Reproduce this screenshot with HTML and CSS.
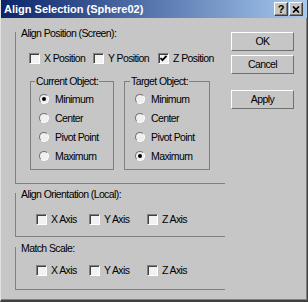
FILE: index.html
```html
<!DOCTYPE html>
<html>

<head>
    <meta charset="utf-8">
    <title>Align Selection</title>
    <link rel="stylesheet" href="styles.css">
</head>

<body>
    <div class="window">
        <div class="titlebar">
            <span class="title">Align Selection (Sphere02)</span>
            <div class="title-buttons">
                <span class="tbtn tbtn-help">?</span>
                <span class="tbtn">
                    <svg width="8" height="7" viewBox="0 0 8 7">
                        <path d="M1 0.5 L7 6.5 M7 0.5 L1 6.5" stroke="#000" stroke-width="1.7" fill="none" />
                    </svg>
                </span>
            </div>
        </div>

        <div class="content">
            <div class="groups">
                <!-- position -->
                <div class="group group-position">
                    <div class="group-label">Align Position (Screen):</div>
                    <div class="check-row row-position">
                        <label class="check"><span class="box"></span>X Position</label>
                        <label class="check"><span class="box"></span>Y Position</label>
                        <label class="check"><span class="box">
                                <svg width="9" height="9" viewBox="0 0 9 9">
                                    <polyline points="1.5,4 3.5,6.2 7.5,1.8" stroke="#000" stroke-width="1.8" fill="none" />
                                </svg>
                            </span>Z Position</label>
                    </div>
                    <div class="objects">
                        <div class="subgroup subgroup-current">
                            <div class="subgroup-label">Current Object:</div>
                            <label class="radio"><span class="dot on"></span>Minimum</label>
                            <label class="radio"><span class="dot"></span>Center</label>
                            <label class="radio"><span class="dot"></span>Pivot Point</label>
                            <label class="radio"><span class="dot"></span>Maximum</label>
                        </div>
                        <div class="subgroup subgroup-target">
                            <div class="subgroup-label">Target Object:</div>
                            <label class="radio"><span class="dot"></span>Minimum</label>
                            <label class="radio"><span class="dot"></span>Center</label>
                            <label class="radio"><span class="dot"></span>Pivot Point</label>
                            <label class="radio"><span class="dot on"></span>Maximum</label>
                        </div>
                    </div>
                </div>

                <!-- orientation -->
                <div class="group group-orient">
                    <div class="group-label">Align Orientation (Local):</div>
                    <div class="check-row row-axis">
                        <label class="check"><span class="box"></span>X Axis</label>
                        <label class="check"><span class="box"></span>Y Axis</label>
                        <label class="check"><span class="box"></span>Z Axis</label>
                    </div>
                </div>

                <!-- scale -->
                <div class="group group-scale">
                    <div class="group-label">Match Scale:</div>
                    <div class="check-row row-axis">
                        <label class="check"><span class="box"></span>X Axis</label>
                        <label class="check"><span class="box"></span>Y Axis</label>
                        <label class="check"><span class="box"></span>Z Axis</label>
                    </div>
                </div>
            </div>

            <div class="buttons">
                <div class="btn">OK</div>
                <div class="btn">Cancel</div>
                <div class="btn btn-apply">Apply</div>
            </div>
        </div>
    </div>
</body>

</html>
```

FILE: styles.css
```css
html,
body {
    margin: 0;
    padding: 0;
    background: #c6c6c6;
}

/* window frame */
.window {
    width: 308px;
    height: 302px;
    box-sizing: border-box;
    background: #c6c6c6;
    border-left: 1px solid #e2e2e2;
    border-right: 1px solid #404040;
    border-bottom: 2px solid #404040;
    box-shadow: inset -1px -1px 0 #808080;
    font-family: "Liberation Sans", Arial, sans-serif;
    font-size: 10.5px;
    letter-spacing: -0.6px;
    color: #000;
}

/* title bar */
.titlebar {
    height: 18px;
    display: flex;
    align-items: center;
    justify-content: space-between;
    padding: 0 4px 0 3px;
    background: linear-gradient(to right, #0a246a, #a6caf0);
}

.title {
    font-weight: bold;
    font-size: 11px;
    letter-spacing: 0;
    color: #fff;
}

.title-buttons {
    display: flex;
    gap: 1px;
}

.tbtn {
    width: 14px;
    height: 14px;
    box-sizing: border-box;
    display: flex;
    align-items: center;
    justify-content: center;
    background: #c6c6c6;
    border: 1px solid;
    border-color: #fff #404040 #404040 #fff;
    box-shadow: inset -1px -1px 0 #808080;
}

.tbtn-help {
    font-weight: bold;
    font-size: 11px;
    letter-spacing: 0;
    line-height: 12px;
}

/* body */
.content {
    display: flex;
    gap: 6px;
    padding-left: 14px;
}

.groups {
    width: 210px;
    padding-top: 14px;
    display: flex;
    flex-direction: column;
}

.group {
    border-left: 1px solid #808080;
    border-bottom: 1px solid #808080;
}

.group-label {
    margin: -5px 0 0 5px;
    line-height: 12px;
    height: 12px;
}

.group-position {
    padding-bottom: 13px;
}

.group-orient {
    margin-top: 9px;
    padding-bottom: 10px;
}

.group-scale {
    margin-top: 10px;
    padding-bottom: 12px;
}

.group-scale .check-row {
    margin-top: 9px;
}

/* checkboxes */
.check-row {
    display: grid;
    height: 14px;
    margin-top: 12px;
    align-items: center;
}

.row-position {
    grid-template-columns: 64px 65px auto;
    padding-left: 13px;
}

.row-axis {
    grid-template-columns: 53px 58px auto;
    padding-left: 20px;
}

.check {
    display: flex;
    align-items: center;
    white-space: nowrap;
}

.box {
    width: 11px;
    height: 11px;
    box-sizing: border-box;
    margin-right: 4px;
    display: flex;
    align-items: center;
    justify-content: center;
    background: #f2f2f2;
    border: 1px solid;
    border-color: #808080 #fff #fff #808080;
    box-shadow: inset 1px 1px 0 #404040;
}

/* current / target */
.objects {
    display: flex;
    gap: 10px;
    margin-top: 16px;
    padding-left: 14px;
}

.subgroup {
    height: 89px;
    box-sizing: border-box;
    border: 1px solid #808080;
    display: flex;
    flex-direction: column;
}

.subgroup-current {
    width: 84px;
    padding-left: 8px;
}

.subgroup-target {
    width: 86px;
    padding-left: 10px;
}

.subgroup-label {
    align-self: flex-start;
    margin: -7px 0 2px -4px;
    padding: 0 1px;
    line-height: 12px;
    background: #c6c6c6;
}

.subgroup-target .subgroup-label {
    margin-left: -5px;
}

.radio {
    height: 19px;
    display: flex;
    align-items: center;
    white-space: nowrap;
}

.dot {
    width: 10px;
    height: 10px;
    box-sizing: border-box;
    margin-right: 6px;
    border-radius: 50%;
    border: 1px solid;
    border-color: #707070 #fff #fff #707070;
    background: #efefef;
    display: flex;
    align-items: center;
    justify-content: center;
}

.dot.on::after {
    content: "";
    width: 4px;
    height: 4px;
    border-radius: 50%;
    background: #000;
}

/* buttons */
.buttons {
    width: 63px;
    padding-top: 14px;
    display: flex;
    flex-direction: column;
}

.btn {
    height: 19px;
    box-sizing: border-box;
    border: 1px solid;
    border-color: #fff #707070 #707070 #fff;
    text-align: center;
    line-height: 17px;
    margin-bottom: 4px;
}

.btn-apply {
    margin-top: 12px;
}
```
